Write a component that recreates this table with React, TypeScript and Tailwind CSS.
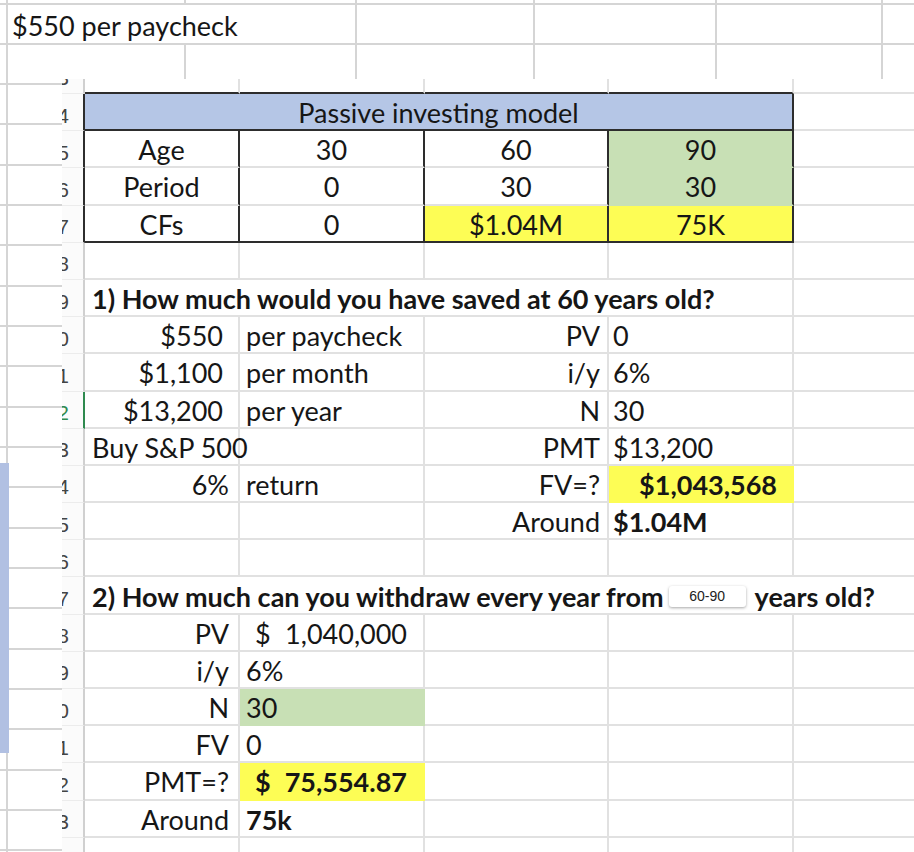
import type { ReactNode } from 'react';

// border colour maps, written out in full so tailwind picks them up
const R = {
  g: 'border-r-[#e1e1e1]',
  d: 'border-r-[#2d2d2d]',
  y: 'border-r-[#fdfd55]',
  n: 'border-r-[#c8e0b5]',
};
const B = {
  g: 'border-b-[#e1e1e1]',
  d: 'border-b-[#2d2d2d]',
  y: 'border-b-[#fdfd55]',
  n: 'border-b-[#c8e0b5]',
};
type Line = keyof typeof R;

function Cell({
  w,
  r = 'g',
  b = 'g',
  className = '',
  children,
}: {
  w: string;
  r?: Line;
  b?: Line;
  className?: string;
  children?: ReactNode;
}) {
  return (
    <div
      className={`${w} h-full shrink-0 flex items-center pt-[2px] whitespace-nowrap border-r-2 border-b-2 ${R[r]} ${B[b]} ${className}`}
    >
      {children}
    </div>
  );
}

function Row({
  n,
  h = 'h-[37.2px]',
  edge = 'g',
  sel = false,
  clip = 'center',
  children,
}: {
  n: string;
  h?: string;
  edge?: 'g' | 'd';
  sel?: boolean;
  clip?: 'top' | 'bottom' | 'center';
  children?: ReactNode;
}) {
  const hdrEdge = sel
    ? 'border-r-[#2f8a4f]'
    : edge === 'd'
      ? 'border-r-[#2d2d2d]'
      : 'border-r-[#d0d0d0]';
  const align = clip === 'top' ? 'items-start' : clip === 'bottom' ? 'items-end' : 'items-center';
  return (
    <div className={`${h} flex shrink-0`}>
      <div
        className={`w-[23px] h-full shrink-0 overflow-hidden flex ${align} justify-end pr-[14px] bg-[#fbfbfb] border-r-2 border-b border-b-[#ececec] ${hdrEdge}`}
      >
        <div
          className={`h-[37.2px] shrink-0 flex items-center pt-[6px] font-['Liberation_Sans',sans-serif] text-[21px] ${sel ? 'text-[#2f8a4f]' : 'text-[#444]'}`}
        >
          {n}
        </div>
      </div>
      {children}
    </div>
  );
}

const A = 'w-[155px]';
const Bc = 'w-[185px]';
const C = 'w-[184px]';
const D = 'w-[185px]';

function Tail() {
  return <div className="flex-1 h-full border-b-2 border-b-[#e1e1e1]" />;
}

function Empty({ n, sel }: { n: string; sel?: boolean }) {
  return (
    <Row n={n} sel={sel}>
      <Cell w={A} />
      <Cell w={Bc} />
      <Cell w={C} />
      <Cell w={D} />
      <Tail />
    </Row>
  );
}

function Pair({
  n,
  a,
  b,
  c,
  d,
  aPad = 'pr-[9px]',
  sel,
  dClass = '',
  dLine,
}: {
  n: string;
  a?: ReactNode;
  b?: ReactNode;
  c?: ReactNode;
  d?: ReactNode;
  aPad?: string;
  sel?: boolean;
  dClass?: string;
  dLine?: Line;
}) {
  return (
    <Row n={n} sel={sel}>
      <Cell w={A} className={`justify-end ${aPad}`}>{a}</Cell>
      <Cell w={Bc} className="pl-[6px]">{b}</Cell>
      <Cell w={C} className="justify-end pr-[7px]">{c}</Cell>
      <Cell w={D} r={dLine} b={dLine} className={dClass || 'pl-[4px]'}>
        {d}
      </Cell>
      <Tail />
    </Row>
  );
}

function Calc({
  n,
  a,
  b,
  bClass = 'pl-[6px]',
  bLine,
}: {
  n: string;
  a: ReactNode;
  b: ReactNode;
  bClass?: string;
  bLine?: Line;
}) {
  return (
    <Row n={n}>
      <Cell w={A} className="justify-end pr-[9px]">{a}</Cell>
      <Cell w={Bc} r={bLine} b={bLine} className={bClass}>{b}</Cell>
      <Cell w={C} />
      <Cell w={D} />
      <Tail />
    </Row>
  );
}

const OUTER_W = ['w-[178px]', 'w-[171px]', 'w-[178px]', 'w-[182px]', 'w-[166px]', 'flex-1'];

function OuterLines() {
  return (
    <>
      <div className="w-[6px] shrink-0" />
      {OUTER_W.map((w, i) => (
        <div key={i} className={`${w} shrink-0 h-full border-l-2 border-l-[#d5d5d5]`} />
      ))}
    </>
  );
}

export default function App() {
  return (
    <div className="relative w-[914px] h-[852px] overflow-hidden bg-white text-[#161616] font-['Lato',sans-serif] text-[27px] leading-none">
      {/* outer sheet, top part */}
      <div className="h-[79px] flex flex-col">
        <div className="h-[3px] flex">
          <OuterLines />
        </div>
        <div className="h-[40px] flex border-t-2 border-t-[#d5d5d5]">
          <div className="w-[6px] shrink-0" />
          <div className="w-[349px] shrink-0 h-full border-l-2 border-l-[#d5d5d5] flex items-center pl-[4px] pt-[2px] whitespace-nowrap">
            $550 per paycheck
          </div>
          {OUTER_W.slice(2).map((w, i) => (
            <div key={i} className={`${w} shrink-0 h-full border-l-2 border-l-[#d5d5d5]`} />
          ))}
        </div>
        <div className="flex-1 flex border-t-2 border-t-[#d5d5d5]">
          <OuterLines />
        </div>
      </div>

      <div className="flex h-[773px]">
        {/* outer sheet, left strip */}
        <div className="w-[62px] shrink-0 flex flex-col">
          <div className="h-[4px] flex shrink-0">
            <div className="w-[6px] shrink-0" />
            <div className="flex-1 border-l-2 border-l-[#d5d5d5]" />
          </div>
          {Array.from({ length: 20 }).map((_, i) => (
            <div key={i} className="h-[40.33px] shrink-0 flex border-t-2 border-t-[#d5d5d5]">
              <div className="w-[6px] shrink-0" />
              <div className="flex-1 border-l-2 border-l-[#d5d5d5]" />
            </div>
          ))}
        </div>

        {/* inset spreadsheet */}
        <div className="flex-1 flex flex-col bg-white">
          <Row n="3" h="h-[15px]" clip="bottom">
            <Cell w={A} b="d" />
            <Cell w={Bc} b="d" />
            <Cell w={C} b="d" />
            <Cell w={D} b="d" />
            <Tail />
          </Row>

          <Row n="4" edge="d">
            <Cell w="w-[709px]" r="d" b="d" className="justify-center bg-[#b5c6e6]">
              Passive investing model
            </Cell>
            <Tail />
          </Row>

          {[
            ['5', 'Age', '30', '60', '90'],
            ['6', 'Period', '0', '30', '30'],
            ['7', 'CFs', '0', '$1.04M', '75K'],
          ].map(([n, a, b, c, d]) => {
            const last = n === '7';
            return (
              <Row key={n} n={n} edge="d">
                <Cell w={A} r="d" b={last ? 'd' : 'g'} className="justify-center">{a}</Cell>
                <Cell w={Bc} r="d" b={last ? 'd' : 'g'} className="justify-center">{b}</Cell>
                <Cell
                  w={C}
                  r="d"
                  b={last ? 'd' : 'g'}
                  className={`justify-center ${last ? 'bg-[#fdfd55]' : ''}`}
                >
                  {c}
                </Cell>
                <Cell
                  w={D}
                  r="d"
                  b={last ? 'd' : 'n'}
                  className={`justify-center ${last ? 'bg-[#fdfd55]' : 'bg-[#c8e0b5]'}`}
                >
                  {d}
                </Cell>
                <Tail />
              </Row>
            );
          })}

          <Empty n="8" />

          <Row n="9">
            <Cell w="w-[709px]" className="pl-[7px] font-bold">
              1) How much would you have saved at 60 years old?
            </Cell>
            <Tail />
          </Row>

          <Pair n="10" a="$550" aPad="pr-[15px]" b="per paycheck" c="PV" d="0" />
          <Pair n="11" a="$1,100" aPad="pr-[15px]" b="per month" c="i/y" d="6%" />
          <Pair n="12" a="$13,200" aPad="pr-[15px]" b="per year" c="N" d="30" sel />
          <Row n="13">
            <Cell w={A} className="pl-[7px]">Buy S&amp;P 500</Cell>
            <Cell w={Bc} />
            <Cell w={C} className="justify-end pr-[7px]">PMT</Cell>
            <Cell w={D} className="pl-[4px]">$13,200</Cell>
            <Tail />
          </Row>
          <Pair
            n="14"
            a="6%"
            b="return"
            c="FV=?"
            d="$1,043,568"
            dLine="y"
            dClass="justify-end pr-[15px] font-bold bg-[#fdfd55]"
          />
          <Pair n="15" c="Around" d="$1.04M" dClass="pl-[4px] font-bold" />
          <Empty n="16" />

          <Row n="17">
            <div className="flex-1 h-full flex items-center pl-[7px] pt-[2px] whitespace-nowrap font-bold border-b-2 border-b-[#e1e1e1]">
              2) How much can you withdraw every year from
              <span className="ml-[5px] mr-[9px] w-[77px] h-[21px] shrink-0 flex items-center justify-center rounded-[3px] bg-white shadow-[0_1px_3px_rgba(0,0,0,0.35)] font-['Liberation_Sans',sans-serif] font-normal text-[14px] text-[#222]">
                60-90
              </span>
              years old?
            </div>
          </Row>

          <Calc
            n="18"
            a="PV"
            b={
              <>
                <span>$</span>
                <span>1,040,000</span>
              </>
            }
            bClass="justify-between pl-[15px] pr-[16px]"
          />
          <Calc n="19" a="i/y" b="6%" />
          <Calc n="20" a="N" b="30" bLine="n" bClass="pl-[6px] bg-[#c8e0b5]" />
          <Calc n="21" a="FV" b="0" />
          <Calc
            n="22"
            a="PMT=?"
            b={
              <>
                <span>$</span>
                <span>75,554.87</span>
              </>
            }
            bLine="y"
            bClass="justify-between pl-[15px] pr-[16px] font-bold bg-[#fdfd55]"
          />
          <Calc n="23" a="Around" b="75k" bClass="pl-[6px] font-bold" />

          <Row n="24" h="flex-1" clip="top">
            <Cell w={A} />
            <Cell w={Bc} />
            <Cell w={C} />
            <Cell w={D} />
            <Tail />
          </Row>
        </div>
      </div>

      {/* selection strip of the outer sheet */}
      <div className="absolute left-0 top-[463px] w-[9px] h-[290px] bg-[#b1c0e2]" />
    </div>
  );
}
